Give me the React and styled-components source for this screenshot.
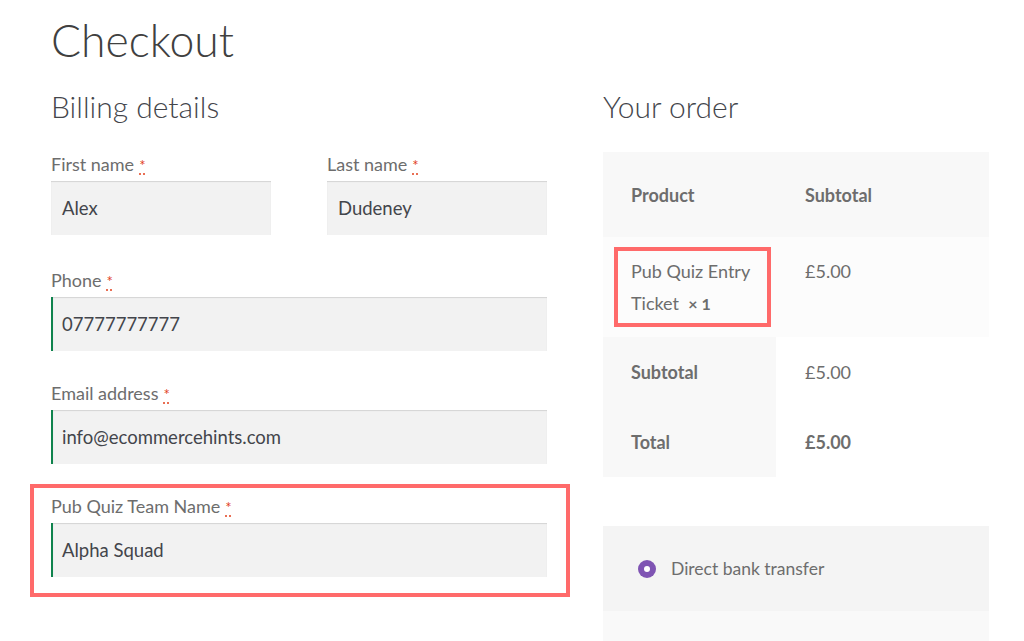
import React from "react";
import styled, { createGlobalStyle } from "styled-components";

const GlobalStyle = createGlobalStyle`
  html, body {
    margin: 0;
    padding: 0;
    background: #fff;
  }
  body {
    font-family: "Lato", "Liberation Sans", sans-serif;
    color: #6d6d6d;
    overflow: hidden;
  }
`;

const Page = styled.div`
  width: 1024px;
  height: 641px;
  box-sizing: border-box;
  padding: 0 35px 0 51px;
  overflow: hidden;
`;

const Title = styled.h1`
  margin: 0;
  padding-top: 12px;
  font-size: 44.5px;
  line-height: 56px;
  font-weight: 300;
  color: #404040;
`;

const Columns = styled.div`
  display: grid;
  grid-template-columns: 496px 386px;
  column-gap: 56px;
  margin-top: 18px;
`;

const Column = styled.div`
  display: flex;
  flex-direction: column;
`;

const SectionTitle = styled.h3`
  margin: 0 0 26px;
  font-size: 30px;
  line-height: 40px;
  font-weight: 300;
  color: #43454b;
`;

const FieldRow = styled.div`
  display: grid;
  grid-template-columns: 220px 220px;
  column-gap: 56px;
  margin-bottom: 3px;
`;

const Field = styled.div`
  position: relative;
  display: flex;
  flex-direction: column;
  margin-bottom: 30px;

  ${(p) =>
    p.$highlight &&
    `
    &::after {
      content: "";
      position: absolute;
      top: -10px;
      left: -21px;
      right: -23px;
      bottom: -20px;
      border: 4px solid #ff6a6a;
      pointer-events: none;
    }
  `}
`;

const Label = styled.label`
  font-size: 18px;
  line-height: 24px;
  color: #6d6d6d;
  margin-bottom: 4px;
`;

const Required = styled.abbr`
  color: #e2401c;
  text-decoration: underline dotted #e2401c;
  text-underline-offset: 3px;
  margin-left: 5px;
  font-size: 15px;
`;

const Input = styled.div`
  height: 54px;
  box-sizing: border-box;
  display: flex;
  align-items: center;
  padding-left: ${(p) => (p.$valid ? "9px" : "11px")};
  background: #f2f2f2;
  box-shadow: inset 0 1px 1px rgba(0, 0, 0, 0.125);
  border-left: ${(p) => (p.$valid ? "2px solid #0f834d" : "none")};
  font-size: 18.5px;
  color: #43454b;
`;

const OrderTable = styled.table`
  width: 386px;
  border-collapse: collapse;
  font-size: 18px;
  color: #6d6d6d;
`;

const HeadCell = styled.th`
  text-align: left;
  font-weight: 700;
  background: #f8f8f8;
  height: 85px;
  padding: 0 0 0 ${(p) => (p.$first ? "28px" : "29px")};
  width: ${(p) => (p.$first ? "145px" : "auto")};
  line-height: 32px;
`;

const ProductRow = styled.tr`
  background: #fcfcfc;
`;

const ProductCell = styled.td`
  position: relative;
  vertical-align: top;
  padding: 18px 0 17px ${(p) => (p.$first ? "28px" : "29px")};
  line-height: 32px;

  ${(p) =>
    p.$highlight &&
    `
    &::after {
      content: "";
      position: absolute;
      top: 10px;
      left: 11px;
      right: 5px;
      bottom: 10px;
      border: 4px solid #ff6a6a;
      pointer-events: none;
    }
  `}
`;

const Qty = styled.strong`
  font-weight: 700;
  font-size: 16px;
`;

const FootHead = styled.th`
  text-align: left;
  font-weight: 700;
  background: #f8f8f8;
  height: 70px;
  padding: 0 0 0 28px;
  line-height: 32px;
`;

const FootCell = styled.td`
  background: #fff;
  height: 70px;
  padding: 0 0 0 29px;
  line-height: 32px;
  font-weight: ${(p) => (p.$bold ? 700 : 400)};
`;

const Payment = styled.div`
  margin-top: 49px;
  background: #f9f9f9;
  height: 200px;
`;

const Method = styled.div`
  display: flex;
  align-items: center;
  gap: 15px;
  height: 85px;
  padding-left: 35px;
  background: #f4f4f4;
  font-size: 17.5px;
  color: #6d6d6d;
`;

const Radio = styled.span`
  width: 18px;
  height: 18px;
  border-radius: 50%;
  background: #7f54b3;
  display: flex;
  align-items: center;
  justify-content: center;

  &::before {
    content: "";
    width: 6px;
    height: 6px;
    border-radius: 50%;
    background: #fff;
  }
`;

function FormField({ label, value, valid, highlight }) {
  return (
    <Field $highlight={highlight}>
      <Label>
        {label}
        <Required title="required">*</Required>
      </Label>
      <Input $valid={valid}>{value}</Input>
    </Field>
  );
}

export default function App() {
  return (
    <Page>
      <GlobalStyle />
      <Title>Checkout</Title>
      <Columns>
        <Column>
          <SectionTitle>Billing details</SectionTitle>
          <FieldRow>
            <FormField label="First name" value="Alex" />
            <FormField label="Last name" value="Dudeney" />
          </FieldRow>
          <FormField label="Phone" value="07777777777" valid />
          <FormField label="Email address" value="info@ecommercehints.com" valid />
          <FormField label="Pub Quiz Team Name" value="Alpha Squad" valid highlight />
        </Column>
        <Column>
          <SectionTitle>Your order</SectionTitle>
          <OrderTable>
            <thead>
              <tr>
                <HeadCell $first>Product</HeadCell>
                <HeadCell>Subtotal</HeadCell>
              </tr>
            </thead>
            <tbody>
              <ProductRow>
                <ProductCell $first $highlight>
                  Pub Quiz Entry Ticket&nbsp;&nbsp;<Qty>×&nbsp;1</Qty>
                </ProductCell>
                <ProductCell>£5.00</ProductCell>
              </ProductRow>
            </tbody>
            <tfoot>
              <tr>
                <FootHead>Subtotal</FootHead>
                <FootCell>£5.00</FootCell>
              </tr>
              <tr>
                <FootHead>Total</FootHead>
                <FootCell $bold>£5.00</FootCell>
              </tr>
            </tfoot>
          </OrderTable>
          <Payment>
            <Method>
              <Radio />
              Direct bank transfer
            </Method>
          </Payment>
        </Column>
      </Columns>
    </Page>
  );
}
